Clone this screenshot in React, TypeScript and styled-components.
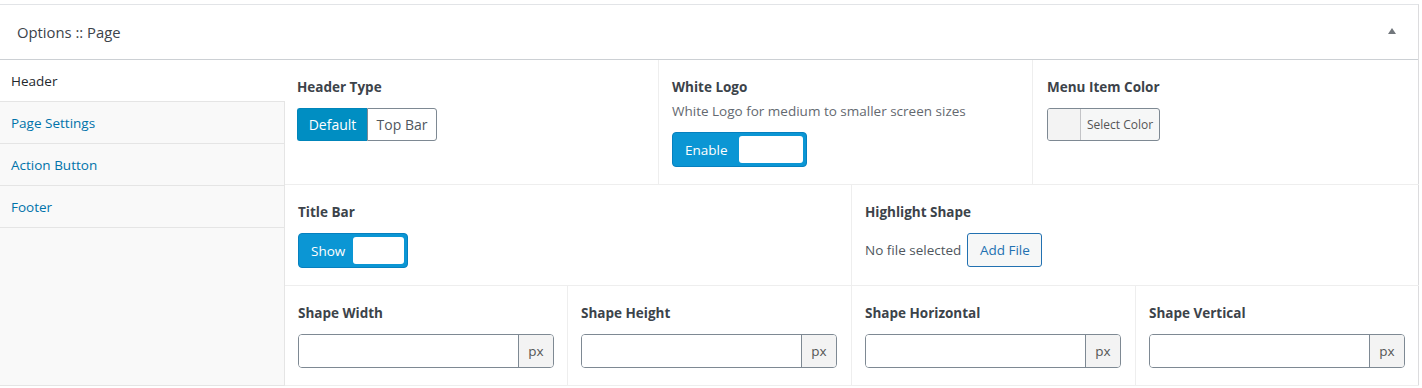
import React from "react";
import styled, { createGlobalStyle } from "styled-components";

const GlobalStyle = createGlobalStyle`
  html, body { margin: 0; padding: 0; background: #fff; }
  body { font-family: "Open Sans", "Noto Sans", Arial, sans-serif; font-size: 13.5px; color: #444; }
  * { box-sizing: border-box; }
`;

const Page = styled.div`
  padding-top: 4px;
  width: 1422px;
`;

const Box = styled.div`
  width: 1419px;
  background: #fff;
  border-top: 1px solid #e2e4e7;
  border-right: 1px solid #dcdcde;
`;

const Header = styled.div`
  height: 55px;
  display: flex;
  align-items: center;
  justify-content: space-between;
  padding: 0 22px 0 17px;
  border-bottom: 1px solid #ccd0d4;
`;

const Title = styled.h2`
  margin: 0;
  font-size: 14.8px;
  font-weight: 400;
  color: #3c434a;
`;

const Arrow = styled.span`
  width: 0;
  height: 0;
  border-left: 4px solid transparent;
  border-right: 4px solid transparent;
  border-bottom: 6px solid #72777c;
  margin-top: -2px;
`;

const Body = styled.div`
  display: flex;
`;

const Sidebar = styled.ul`
  list-style: none;
  margin: 0;
  padding: 0;
  width: 285px;
  flex: none;
  background: #f9f9f9;
  border-right: 1px solid #e5e5e5;
  border-bottom: 1px solid #e5e5e5;
`;

const NavItem = styled.li<{ $active?: boolean }>`
  height: 42px;
  display: flex;
  align-items: center;
  padding-left: 11px;
  border-bottom: 1px solid #e5e5e5;
  font-size: 13.5px;
  color: ${(p) => (p.$active ? "#23282d" : "#0073aa")};
  background: ${(p) => (p.$active ? "#fff" : "transparent")};
  margin-right: ${(p) => (p.$active ? "-1px" : "0")};
`;

const Content = styled.div`
  flex: 1;
  display: flex;
  flex-direction: column;
`;

const Row = styled.div<{ $cols: string }>`
  display: grid;
  grid-template-columns: ${(p) => p.$cols};
  border-bottom: 1px solid #eee;
`;

const Cell = styled.div<{ $pl?: number }>`
  padding: 18px 14px 17px ${(p) => p.$pl ?? 13}px;
  border-left: 1px solid #eee;
  &:first-child { border-left: none; }
`;

const Label = styled.div`
  font-size: 13.5px;
  font-weight: 700;
  line-height: 18px;
  color: #3c434a;
  margin-bottom: 12px;
`;

const LabelTight = styled(Label)`
  margin-bottom: 6px;
`;

const Desc = styled.div`
  font-size: 13.5px;
  line-height: 18px;
  color: #646970;
  margin-bottom: 12px;
`;

const ButtonGroup = styled.div`
  display: inline-flex;
`;

const SegButton = styled.button<{ $active?: boolean }>`
  width: 70px;
  height: 33px;
  font-family: inherit;
  font-size: 14px;
  padding: 0;
  border: 1px solid ${(p) => (p.$active ? "#0085ba" : "#7e8993")};
  background: ${(p) => (p.$active ? "#008ec2" : "#fff")};
  color: ${(p) => (p.$active ? "#fff" : "#50575e")};
  &:first-child { border-radius: 3px 0 0 3px; border-right: none; }
  &:last-child { border-radius: 0 3px 3px 0; }
`;

const Toggle = styled.div<{ $w: number }>`
  width: ${(p) => p.$w}px;
  height: 35px;
  display: flex;
  align-items: center;
  justify-content: space-between;
  padding: 3px 3px 3px 12px;
  background: #0b96d4;
  border: 1px solid #0680bf;
  border-radius: 4px;
  color: #fff;
  font-size: 13.5px;
`;

const Knob = styled.span<{ $w: number }>`
  width: ${(p) => p.$w}px;
  height: 27px;
  background: #fff;
  border-radius: 3px;
`;

const ColorButton = styled.button`
  display: inline-flex;
  align-items: stretch;
  height: 33px;
  padding: 0;
  font-family: inherit;
  border: 1px solid #7e8993;
  border-radius: 3px;
  background: #f6f7f7;
  overflow: hidden;
`;

const Swatch = styled.span`
  width: 33px;
  background: #f3f3f3;
  border-right: 1px solid #c3c4c7;
`;

const ColorText = styled.span`
  display: flex;
  align-items: center;
  padding: 0 6px;
  font-size: 12px;
  color: #555;
`;

const FileRow = styled.div`
  display: flex;
  align-items: center;
  gap: 6px;
  font-size: 13.5px;
  color: #50575e;
`;

const AddFile = styled.button`
  height: 34px;
  width: 75px;
  padding: 0;
  font-family: inherit;
  font-size: 13.5px;
  color: #2271b1;
  background: #f6f7f7;
  border: 1px solid #2271b1;
  border-radius: 3px;
`;

const InputGroup = styled.div`
  display: flex;
  width: 256px;
  height: 34px;
  border: 1px solid #7e8993;
  border-radius: 4px;
  overflow: hidden;
`;

const TextInput = styled.input`
  flex: 1;
  min-width: 0;
  border: none;
  outline: none;
  font-family: inherit;
  font-size: 13.5px;
  padding: 0 8px;
`;

const Addon = styled.span`
  width: 35px;
  display: flex;
  align-items: center;
  justify-content: center;
  background: #f3f3f3;
  border-left: 1px solid #7e8993;
  color: #555;
  font-size: 13.5px;
`;

const dims = ["Shape Width", "Shape Height", "Shape Horizontal", "Shape Vertical"];

export default function App() {
  return (
    <>
      <GlobalStyle />
      <Page>
        <Box>
          <Header>
            <Title>Options :: Page</Title>
            <Arrow />
          </Header>
          <Body>
            <Sidebar>
              <NavItem $active>Header</NavItem>
              <NavItem>Page Settings</NavItem>
              <NavItem>Action Button</NavItem>
              <NavItem>Footer</NavItem>
            </Sidebar>
            <Content>
              <Row $cols="373px 374px 1fr">
                <Cell $pl={12}>
                  <Label>Header Type</Label>
                  <ButtonGroup>
                    <SegButton $active>Default</SegButton>
                    <SegButton>Top Bar</SegButton>
                  </ButtonGroup>
                </Cell>
                <Cell>
                  <LabelTight>White Logo</LabelTight>
                  <Desc>White Logo for medium to smaller screen sizes</Desc>
                  <Toggle $w={135}>
                    Enable
                    <Knob $w={64} />
                  </Toggle>
                </Cell>
                <Cell $pl={14}>
                  <Label>Menu Item Color</Label>
                  <ColorButton>
                    <Swatch />
                    <ColorText>Select Color</ColorText>
                  </ColorButton>
                </Cell>
              </Row>
              <Row $cols="566px 1fr">
                <Cell>
                  <Label>Title Bar</Label>
                  <Toggle $w={110}>
                    Show
                    <Knob $w={51} />
                  </Toggle>
                </Cell>
                <Cell>
                  <Label>Highlight Shape</Label>
                  <FileRow>
                    No file selected
                    <AddFile>Add File</AddFile>
                  </FileRow>
                </Cell>
              </Row>
              <Row $cols="282px 284px 284px 1fr">
                {dims.map((d) => (
                  <Cell key={d}>
                    <Label>{d}</Label>
                    <InputGroup>
                      <TextInput type="text" />
                      <Addon>px</Addon>
                    </InputGroup>
                  </Cell>
                ))}
              </Row>
            </Content>
          </Body>
        </Box>
      </Page>
    </>
  );
}
